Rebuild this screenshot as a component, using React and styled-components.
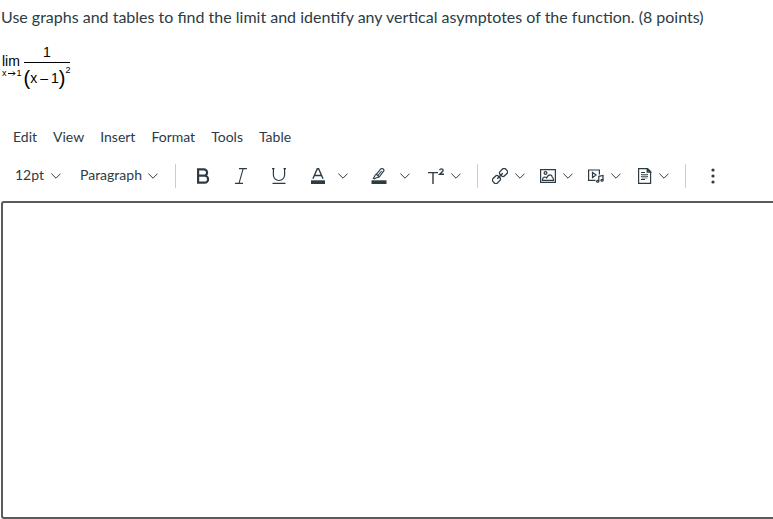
import React from "react";
import styled, { createGlobalStyle } from "styled-components";

const ink = "#2d3b45";

const GlobalStyle = createGlobalStyle`
  *, *::before, *::after { box-sizing: border-box; }
  body {
    margin: 0;
    background: #fff;
    color: ${ink};
    font-family: Lato, "Liberation Sans", sans-serif;
  }
`;

const Page = styled.main`
  display: flex;
  flex-direction: column;
  min-height: 100vh;
  overflow-x: hidden;
`;

const Prompt = styled.p`
  margin: 0;
  padding: 5px 0 0 1px;
  font-size: 16px;
  line-height: 24px;
`;

const Formula = styled.div`
  display: flex;
  align-items: flex-start;
  margin-top: 15px;
  padding-left: 2px;
  color: #000;
  font-family: "Liberation Sans", Arial, sans-serif;
`;

const Limit = styled.div`
  padding-top: 10px;
  font-size: 14px;
  line-height: 14px;
`;

const Approach = styled.div`
  display: flex;
  align-items: center;
  gap: 1px;
  font-size: 9px;
  line-height: 10px;
`;

const Fraction = styled.div`
  display: flex;
  flex-direction: column;
  margin-left: 2px;
`;

const Numerator = styled.div`
  height: 19px;
  border-bottom: 1px solid #000;
  font-size: 14px;
  line-height: 16px;
  text-align: center;
`;

const Denominator = styled.div`
  display: flex;
  align-items: center;
  height: 30px;
  font-size: 14px;
`;

const Difference = styled.span`
  display: flex;
  gap: 3px;
`;

const Paren = styled.span`
  font-size: 20px;
  line-height: 28px;
`;

const Power = styled.sup`
  align-self: flex-start;
  padding-top: 2px;
  font-size: 9px;
  line-height: 10px;
`;

const MenuBar = styled.nav`
  display: flex;
  gap: 16px;
  padding: 34px 13px 0;
`;

const MenuButton = styled.button`
  padding: 0;
  border: 0;
  background: none;
  color: inherit;
  font: 14px/20px Lato, "Liberation Sans", sans-serif;
`;

const Toolbar = styled.div`
  display: flex;
  align-items: center;
  height: 50px;
  margin-top: 4px;
  padding-left: 15px;
`;

const Group = styled.div`
  display: flex;
  align-items: center;
  gap: ${(p) => p.$gap}px;
`;

const Divider = styled.span`
  flex: none;
  width: 1px;
  height: 24px;
  margin: 0 ${(p) => p.$after}px 0 ${(p) => p.$before}px;
  background: #c7cdd1;
`;

const Picker = styled.label`
  display: grid;
  grid-template-columns: auto 10px;
  align-items: center;

  select {
    grid-area: 1 / 1 / 2 / 3;
    appearance: none;
    padding: 0 16px 2px 0;
    border: 0;
    background: none;
    color: inherit;
    font: 14px/20px Lato, "Liberation Sans", sans-serif;
  }

  svg {
    grid-area: 1 / 2;
    pointer-events: none;
  }
`;

const ToolButton = styled.button`
  display: flex;
  align-items: center;
  gap: ${(p) => p.$gap || 0}px;
  height: 24px;
  padding: 0;
  border: 0;
  background: none;
  color: inherit;
`;

const Icon = styled.svg`
  display: block;
  flex: none;
  fill: none;
  stroke: currentColor;
`;

const Editor = styled.textarea`
  flex: 1;
  display: block;
  min-height: 120px;
  margin: 0 0 0 1px;
  padding: 12px;
  border: 2px solid #5a5a5a;
  border-right: 0;
  border-radius: 3px 0 0 3px;
  outline: 0;
  resize: none;
  background: #fff;
  color: inherit;
  font: 16px/24px Lato, "Liberation Sans", sans-serif;
`;

const Chevron = () => (
  <Icon width="10" height="6" viewBox="0 0 10 6" strokeWidth="1" aria-hidden="true">
    <path d="M.4.6 5 5.2 9.6.6" />
  </Icon>
);

const BoldIcon = () => (
  <Icon width="14" height="16" viewBox="0 0 14 16" strokeWidth="2.2">
    <path d="M2.1 1.3h5.8a3.2 3.2 0 0 1 0 6.4H2.1zM2.1 7.7h6.5a3.5 3.5 0 0 1 0 7H2.1z" />
  </Icon>
);

const ItalicIcon = () => (
  <Icon width="12" height="16" viewBox="0 0 12 16" strokeWidth="1.1">
    <path d="M4 .6h8M0 15.4h8M8.2.6 4 15.4" />
  </Icon>
);

const UnderlineIcon = () => (
  <Icon width="14" height="16" viewBox="0 0 14 16" strokeWidth="1.2">
    <path d="M0 .6h2.5M11.5.6H14M1.4.6v6.3a5.6 5.6 0 0 0 11.2 0V.6M.5 15.4h13" />
  </Icon>
);

const TextColorIcon = () => (
  <Icon width="14" height="16" viewBox="0 0 14 16" strokeWidth="1.4">
    <path d="M1.9 10.8 6.3.7h1.3l4.4 10.1M3.6 7.5h6.7" />
    <path d="M0 12.3h14V16H0z" fill="currentColor" stroke="none" />
  </Icon>
);

const HighlightIcon = () => (
  <Icon width="16" height="16" viewBox="0 0 16 16" strokeWidth="1.1">
    <path d="M5.2 6.3 9.8 1q1-1 2.4 0 1.3 1 .4 2.2L8.3 8.8q-1.5 1.1-3 .9L3.3 11l-1-.4 1.2-2q.2-1.4 1.7-2.3zM5.2 6.3l3.1 2.5M10.7 3 6.8 7.5" />
    <path d="M.5 12.3h15V16H.5z" fill="currentColor" stroke="none" />
  </Icon>
);

const SuperscriptIcon = () => (
  <Icon width="16" height="16" viewBox="0 0 16 16">
    <path d="M0 4.6h10M5 4.6V16" strokeWidth="1.4" />
    <path d="M11.6 2.2q.4-1.3 1.8-1.3 1.7 0 1.7 1.4 0 .8-1.1 1.8l-2.3 2.1H16" strokeWidth="1.4" />
  </Icon>
);

const LinkIcon = () => (
  <Icon width="16" height="16" viewBox="0 0 16 16" strokeWidth="1.3">
    <g transform="rotate(-45 8 8)">
      <rect x="-.9" y="4.9" width="7.7" height="6.2" rx="2.2" />
      <rect x="9.2" y="4.9" width="7.7" height="6.2" rx="2.2" />
      <path d="M4.2 8h7.6" strokeWidth="1.5" />
    </g>
  </Icon>
);

const ImageIcon = () => (
  <Icon width="16" height="14" viewBox="0 0 16 14">
    <path d="M.6.6h14.8v12.8H.6z" strokeWidth="1.2" />
    <circle cx="5.5" cy="4" r="1.4" strokeWidth="1.2" />
    <path d="M2.4 11.3q.2-3 2-3.3 1.2 0 2.2.9Q8 5.8 10.2 5.9q1.8.2 2 2.1 1.3.7 1.4 3.3z" strokeWidth="1.2" />
  </Icon>
);

const MediaIcon = () => (
  <Icon width="16" height="14" viewBox="0 0 16 14" strokeWidth="1.2">
    <path d="M7.5 11.4H.6V1h10.8v4.4M4.5 3.5v5L8 6z" />
    <path d="M10.8 12V7.3l4.2-.9v4.8" />
    <ellipse cx="9.7" cy="12.3" rx="1.2" ry=".9" />
    <ellipse cx="14" cy="11.3" rx="1.1" ry=".9" />
  </Icon>
);

const DocumentIcon = () => (
  <Icon width="16" height="16" viewBox="0 0 16 16" strokeWidth="1.2">
    <path d="M2.6.6h9l3 3v11.8h-12z" />
    <path d="M11.2.8v3.4h3.4z" fill="#9aa3aa" />
    <path d="M5 4.5h4M5 6.5h7M5 8.5h7M5 11.5h4" strokeWidth="1" />
    <path d="M5.5 6h6v5h-6z" fill="#8d979f" fillOpacity=".6" stroke="none" />
  </Icon>
);

const MoreIcon = () => (
  <Icon width="4" height="16" viewBox="0 0 4 16">
    <g fill="currentColor" stroke="none">
      <circle cx="2" cy="2" r="1.6" />
      <circle cx="2" cy="8" r="1.6" />
      <circle cx="2" cy="14" r="1.6" />
    </g>
  </Icon>
);

const ArrowIcon = () => (
  <Icon width="8" height="5" viewBox="0 0 8 5" strokeWidth="1">
    <path d="M0 2.5h7M5 .5l2 2-2 2" />
  </Icon>
);

const menus = ["Edit", "View", "Insert", "Format", "Tools", "Table"];

function Tool({ label, icon, gap }) {
  return (
    <ToolButton type="button" aria-label={label} $gap={gap}>
      {icon}
      {gap && <Chevron />}
    </ToolButton>
  );
}

export default function App() {
  return (
    <Page>
      <GlobalStyle />
      <Prompt>
        Use graphs and tables to find the limit and identify any vertical asymptotes of the function. (8 points)
      </Prompt>
      <Formula>
        <Limit>
          lim
          <Approach>
            <span>x</span>
            <ArrowIcon />
            <span>1</span>
          </Approach>
        </Limit>
        <Fraction>
          <Numerator>1</Numerator>
          <Denominator>
            <Paren>(</Paren>
            <Difference>
              <span>x</span>
              <span>–</span>
              <span>1</span>
            </Difference>
            <Paren>)</Paren>
            <Power>2</Power>
          </Denominator>
        </Fraction>
      </Formula>
      <MenuBar aria-label="Editor menu">
        {menus.map((name) => (
          <MenuButton type="button" key={name}>{name}</MenuButton>
        ))}
      </MenuBar>
      <Toolbar role="toolbar" aria-label="Formatting">
        <Group $gap={19}>
          <Picker>
            <select aria-label="Font size"><option>12pt</option></select>
            <Chevron />
          </Picker>
          <Picker>
            <select aria-label="Block style"><option>Paragraph</option></select>
            <Chevron />
          </Picker>
        </Group>
        <Divider $before={17} $after={20} />
        <Group $gap={25}>
          <Tool label="Bold" icon={<BoldIcon />} />
          <Tool label="Italic" icon={<ItalicIcon />} />
          <Tool label="Underline" icon={<UnderlineIcon />} />
          <Group $gap={18}>
            <Group $gap={23}>
              <Tool label="Text color" icon={<TextColorIcon />} gap={13} />
              <Tool label="Highlight color" icon={<HighlightIcon />} gap={13} />
            </Group>
            <Tool label="Superscript and subscript" icon={<SuperscriptIcon />} gap={7} />
          </Group>
        </Group>
        <Divider $before={16} $after={14} />
        <Group $gap={15}>
          <Tool label="Links" icon={<LinkIcon />} gap={7} />
          <Tool label="Images" icon={<ImageIcon />} gap={7} />
          <Tool label="Media" icon={<MediaIcon />} gap={7} />
          <Tool label="Documents" icon={<DocumentIcon />} gap={7} />
        </Group>
        <Divider $before={16} $after={25} />
        <Tool label="More options" icon={<MoreIcon />} />
      </Toolbar>
      <Editor aria-label="Answer" />
    </Page>
  );
}
